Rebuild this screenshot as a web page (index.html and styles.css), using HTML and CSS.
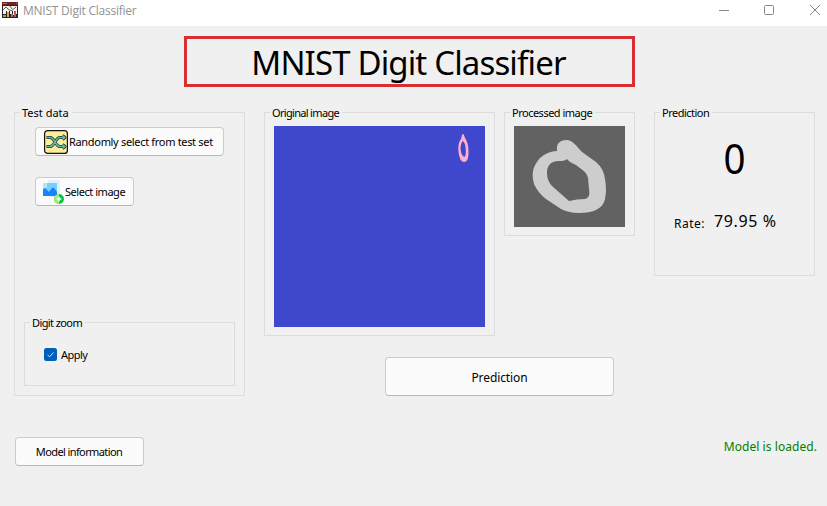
FILE: index.html
```
<!DOCTYPE html>
<html lang="en">
<head>
<meta charset="utf-8">
<title>MNIST Digit Classifier</title>
<link rel="stylesheet" href="styles.css">
</head>
<body>
<header class="titlebar">
  <svg class="app-icon" width="16" height="16" viewBox="0 0 16 16"><path fill="#25252a" d="M0 0h16v16H0z"/><path fill="#712126" d="M0 0h16v3H0z"/><path fill="#d65758" d="M1 1h4v1H1zM14 1h1v1h-1z"/><path fill="#f5f3e9" d="M1 4h14v5H1z"/><path d="M1 8l3-3 2 2 3 2 5-4M8 4l2 3" fill="none" stroke="#36363a" stroke-width=".8"/><path fill="#f5f3e9" d="M1 9h3v3H1zM5 8h2v2H5zM8 9h2v3H8zM11 9h1v4h-1zM14 9h1v3h-1z"/><path fill="#80af44" d="M1 13h3v2H1z"/><path fill="#e1a44f" d="M5 10h2v5H5z"/><path fill="#5689af" d="M9 12h2v3H9z"/><path fill="#d94d4b" d="M12 9h2v6h-2z"/></svg>
  <span class="caption">MNIST Digit Classifier</span>
  <svg class="window-controls" width="102" height="12" viewBox="0 0 102 12"><path d="M0 6.5h10M46.5 1.5h7q1 0 1 1v7q0 1-1 1h-7q-1 0-1-1v-7q0-1 1-1zM91 1l10 10m0-10L91 11" fill="none" stroke="#888"/></svg>
</header>
<main>
  <h1><span>MNIST Digit Classifier</span></h1>
  <div class="workspace">
    <section class="group test-data">
      <h2>Test data</h2>
      <button class="btn random">
        <svg width="24" height="24" viewBox="0 0 24 24"><rect x=".6" y=".6" width="22.8" height="22.8" rx="3" fill="#ffed9c" stroke="#111" stroke-width="1.2"/><g fill="none" stroke-linejoin="round"><path d="M2.500 7.500H6C11 7.500 11 16.500 16 16.500h5M2.500 16.500H6C11 16.500 11 7.500 16 7.500h5M18.500 5.500l2.500 2-2.500 2M18.500 14.500l2.500 2-2.500 2" stroke="#16342f" stroke-width="3"/><path d="M3 7.500H6C11 7.500 11 16.500 16 16.500h5M3 16.500H6C11 16.500 11 7.500 16 7.500h5M18.500 5.500l2.500 2-2.500 2M18.500 14.500l2.500 2-2.500 2" stroke="#64baa2" stroke-width="1.600"/></g></svg>
        <span>Randomly select from test set</span>
      </button>
      <button class="btn select">
        <svg width="24" height="24" viewBox="0 0 24 24"><rect x="7" y="0" width="12" height="17" rx="2" fill="#e2edff"/><path fill="#77cffb" d="M2 3h14v13H2z"/><path fill="#b2e6ff" d="M2 3h4v5H2z"/><path fill="#1683fc" d="M2 10l2-2 4 4 3-4q1-1 2 0l3 4v4H2z"/><circle cx="18" cy="19" r="5" fill="#00ca47"/><path fill="#a4eb70" d="M18 14a5 5 0 0 0 0 10z"/><path d="M15.700 19h4.600M18 16.700v4.600" stroke="#fff" stroke-width="1.500"/></svg>
        <span>Select image</span>
      </button>
      <section class="group digit-zoom">
        <h2>Digit zoom</h2>
        <label class="check"><svg width="13" height="13" viewBox="0 0 13 13"><rect width="13" height="13" rx="2.500" fill="#005fb8"/><path d="M3.500 6.800l2 2 4-4.300" fill="none" stroke="#d4e4f4"/></svg><span>Apply</span></label>
      </section>
    </section>
    <div class="center">
      <div class="images">
        <section class="group original">
          <h2>Original image</h2>
          <svg width="211" height="201" viewBox="0 0 211 201"><path fill="#3f48cc" d="M0 0h211v201H0z"/><path fill="#ffaec9" fill-rule="evenodd" d="M188 9q1-2 2 0l1 3q3 4 3.500 12 .5 12-4 12-5 0-6-10-1-9 2.500-13zM188.500 15q-2 3-2 7 .5 8 4 9 1.700-2 1.200-8-.5-7-3.200-8z"/></svg>
        </section>
        <section class="group processed">
          <h2>Processed image</h2>
          <svg width="111" height="101" viewBox="0 0 111 101"><path fill="#626262" d="M0 0h111v101H0z"/><path fill="#cdcdcd" fill-rule="evenodd" d="M43 24C42 17 47 14 53 14C60 15 62 20 68 26L82 36Q90 43 91 53Q93 64 91 73C89 83 79 87 65 87Q55 87 47 83L32 73Q24 67 20 58C17 47 19 40 26 32Q34 25 43 25ZM53 33Q51 35 45 35C36 35 33 40 33 47Q33 55 38 60L55 75Q63 73 71 73C75 72 76 69 75 63L74 52C73 46 67 43 62 39Q55 36 53 33Z"/></svg>
        </section>
      </div>
      <button class="btn predict"><span>Prediction</span></button>
    </div>
    <section class="group result">
      <h2>Prediction</h2>
      <div class="digit">0</div>
      <div class="rate"><span class="rate-label">Rate:</span><span class="rate-value">79.95 %</span></div>
    </section>
  </div>
  <footer>
    <button class="btn info"><span>Model information</span></button>
    <span class="status">Model is loaded.</span>
  </footer>
</main>
</body>
</html>
```
FILE: styles.css
```
* { box-sizing: border-box; }
body { margin: 0; width: 827px; height: 506px; overflow: hidden; background: #f0f0f0; color: #000; font: 11px/14px "Noto Sans", sans-serif; }
svg { display: block; flex: none; }
span { white-space: nowrap; }
.titlebar { height: 26px; background: #fff; display: flex; align-items: flex-start; padding: 2px 6px 0 2px; }
.caption { margin: 1px 0 0 5px; color: #929292; font: 12px/16px "Open Sans", sans-serif; letter-spacing: -.23px; }
.window-controls { margin: 2px 0 0 auto; }
main { padding: 10px 12px 0 14px; }
h1 { width: 451px; height: 51px; margin: 0 0 25px 170px; padding-right: 2px; border: 3px solid #d92f31; display: flex; justify-content: center; font-size: 33px; line-height: 47px; font-weight: 400; letter-spacing: -.86px; }
.workspace { display: flex; align-items: flex-start; gap: 19px; }
.group { border: 1px solid #dcdcdc; }
h2 { width: fit-content; height: 14px; margin: -7px 0 0 5px; padding: 0 3px 0 2px; background: #f0f0f0; font: inherit; letter-spacing: -.2px; white-space: nowrap; }
.original h2 { letter-spacing: -.68px; }
.processed h2 { letter-spacing: -.5px; }
.result h2 { letter-spacing: -.5px; }
.digit-zoom h2 { letter-spacing: -.6px; }
.test-data { width: 231px; height: 284px; display: flex; flex-direction: column; align-items: flex-start; padding: 0 9px 9px; }
.test-data > h2 { margin-left: -4px; letter-spacing: 0; }
.btn { height: 29px; padding: 0; border: 1px solid #cbcbcb; border-bottom-color: #b7b7b7; border-radius: 4px; background: #fbfbfb; color: #000; font: inherit; letter-spacing: -.2px; display: flex; align-items: center; justify-content: center; }
.random { width: 189px; margin: 7px 0 21px 11px; justify-content: flex-start; padding-left: 8px; gap: 1px; letter-spacing: -.32px; }
.select { width: 99px; margin-left: 11px; justify-content: flex-start; padding-left: 5px; letter-spacing: -.46px; }
.digit-zoom { width: 211px; height: 64px; margin-top: auto; }
.check { display: flex; align-items: center; gap: 4px; margin: 18px 0 0 19px; letter-spacing: -.55px; }
.check svg { margin-top: -1px; }
.center { width: 371px; }
.images { display: flex; align-items: flex-start; gap: 9px; }
.original { width: 231px; height: 224px; }
.processed { width: 131px; height: 124px; }
.original svg, .processed svg { margin: 6px 0 0 9px; }
.predict { width: 229px; height: 39px; margin: 21px 0 0 121px; padding-top: 2px; font-size: 12px; letter-spacing: -.1px; }
.result { width: 161px; height: 164px; }
.digit { margin-top: 10px; height: 56px; text-align: center; font-size: 41px; line-height: 57px; transform: scaleX(.94); }
.rate { display: flex; align-items: baseline; margin: 24px 0 0 19px; gap: 9px; }
.rate-label { position: relative; top: 1px; font-size: 12px; line-height: 18px; letter-spacing: .5px; }
.rate-value { font-size: 16px; line-height: 22px; letter-spacing: .6px; }
footer { display: flex; justify-content: space-between; align-items: flex-start; margin: 41px -2px 0 1px; }
.info { width: 129px; padding-right: 1px; letter-spacing: -.6px; }
.status { color: #008000; margin-top: 1px; font-size: 12px; line-height: 18px; letter-spacing: .06px; }
```
